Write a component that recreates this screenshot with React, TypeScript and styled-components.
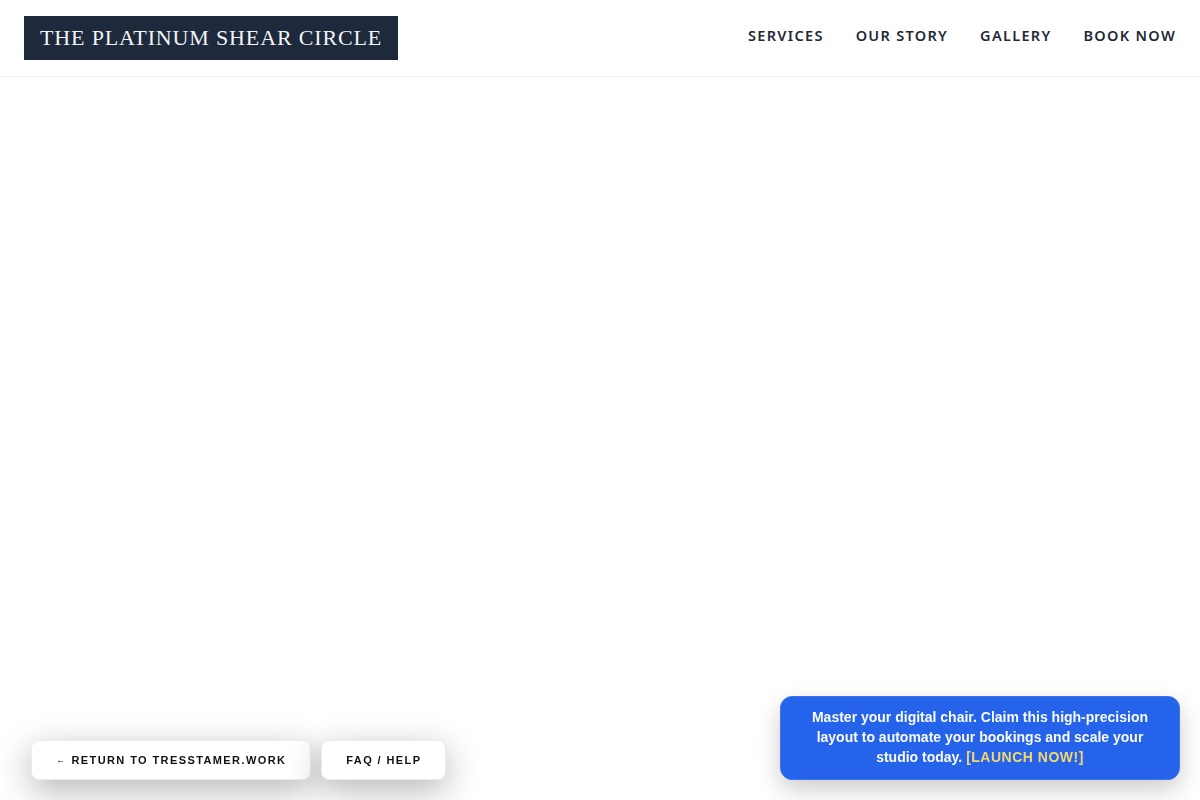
import React from 'react'
import styled, { createGlobalStyle } from 'styled-components'

const GlobalStyle = createGlobalStyle`
  html, body {
    margin: 0;
    padding: 0;
    background: #ffffff;
  }
  body {
    font-family: "Liberation Sans", Arial, sans-serif;
    min-height: 800px;
  }
  * {
    box-sizing: border-box;
  }
`

const navLinks = ['Services', 'Our Story', 'Gallery', 'Book Now']

const App: React.FC = () => {
  return (
    <>
      <GlobalStyle />
      <StyledHeader>
        <StyledLogo href="#">The Platinum Shear Circle</StyledLogo>
        <StyledNav>
          {navLinks.map(link => (
            <StyledNavLink key={link} href="#">{link}</StyledNavLink>
          ))}
        </StyledNav>
      </StyledHeader>
      <StyledMain />
      <StyledPillBar>
        <StyledPill href="#"><StyledArrow>←</StyledArrow> Return to tresstamer.work</StyledPill>
        <StyledPill href="#">FAQ / Help</StyledPill>
      </StyledPillBar>
      <StyledPromo>
        Master your digital chair. Claim this high-precision layout to automate your bookings and scale your studio today.{' '}
        <StyledPromoLink href="#">[LAUNCH NOW!]</StyledPromoLink>
      </StyledPromo>
    </>
  )
}

const StyledHeader = styled.header`
  display: flex;
  align-items: center;
  justify-content: space-between;
  height: 77px;
  padding: 0 24px 1px;
  border-bottom: 1px solid #f1f2f4;
  background: #ffffff;
`

const StyledLogo = styled.a`
  display: inline-block;
  background: #1e293b;
  color: #f1f5f9;
  font-family: "Liberation Serif", "Times New Roman", serif;
  font-size: 22px;
  letter-spacing: 0.85px;
  text-transform: uppercase;
  text-decoration: none;
  line-height: 44px;
  height: 44px;
  padding: 0 16px;
  margin-top: 1px;
`

const StyledNav = styled.nav`
  display: flex;
  align-items: center;
  gap: 32px;
  margin-top: -6px;
`

const StyledNavLink = styled.a`
  color: #1f2937;
  font-family: "Noto Sans", Inter, sans-serif;
  font-size: 14.5px;
  font-weight: 600;
  letter-spacing: 1.3px;
  text-transform: uppercase;
  text-decoration: none;
`

const StyledMain = styled.main`
  min-height: 723px;
`

const StyledPillBar = styled.div`
  position: fixed;
  left: 31px;
  bottom: 20px;
  display: flex;
  gap: 10px;
`

const StyledPill = styled.a`
  display: inline-flex;
  align-items: center;
  height: 40px;
  padding: 0 24px;
  background: #ffffff;
  border: 1px solid #ececec;
  border-radius: 8px;
  box-shadow: 0 10px 35px rgba(0, 0, 0, 0.3);
  color: #111111;
  font-family: "Liberation Sans", Arial, sans-serif;
  font-size: 11px;
  font-weight: 700;
  letter-spacing: 1.4px;
  text-transform: uppercase;
  text-decoration: none;
  white-space: pre;
`

const StyledArrow = styled.span`
  font-size: 9px;
  font-weight: 400;
  letter-spacing: 0;
  margin-right: 2px;
`

const StyledPromo = styled.div`
  position: fixed;
  right: 20px;
  bottom: 20px;
  width: 400px;
  padding: 10px 24px 12px;
  background: #2563eb;
  border: 1px solid #3b73f0;
  border-radius: 12px;
  box-shadow: 0 10px 25px rgba(0, 0, 0, 0.2);
  color: #f8fafc;
  font-family: "Liberation Sans", Arial, sans-serif;
  font-size: 14px;
  font-weight: 700;
  line-height: 20px;
  text-align: center;
`

const StyledPromoLink = styled.a`
  color: #f2d86a;
  letter-spacing: 0.5px;
  text-decoration: none;
`

export default App
